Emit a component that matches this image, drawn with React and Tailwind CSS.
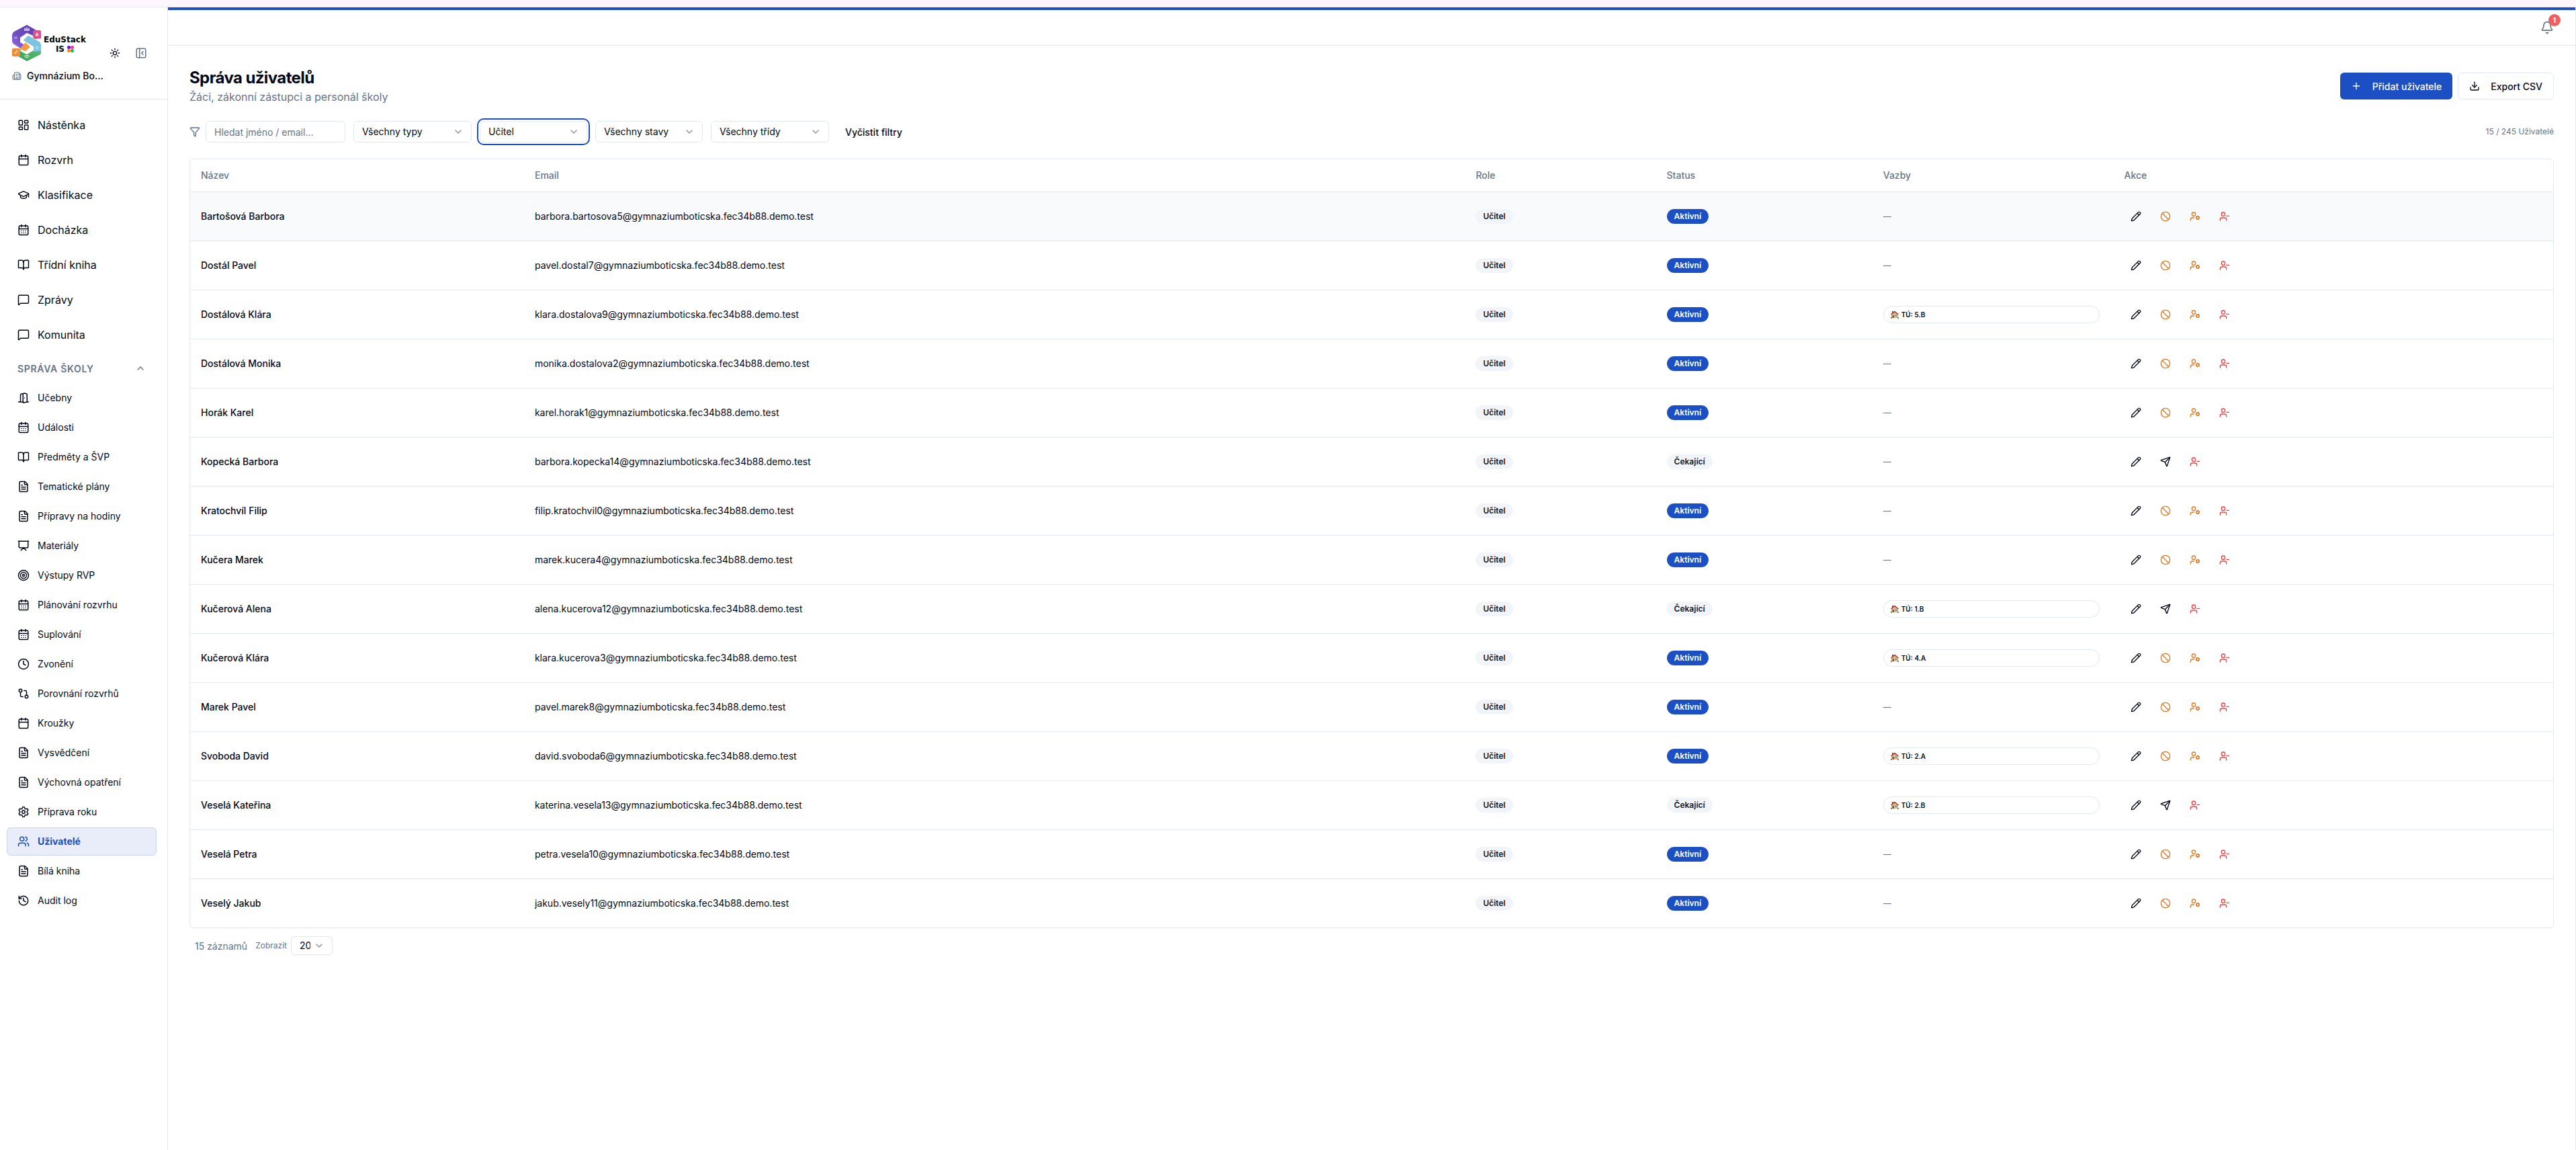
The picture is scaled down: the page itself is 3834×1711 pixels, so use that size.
import React from "react";
import {
  LayoutDashboard, Calendar, GraduationCap, CalendarDays, BookOpen, MessageSquare, ChevronUp, ChevronDown,
  FileText, Presentation, Target, Clock, GitCompare, Settings, Users, History, Sun, PanelLeftClose, Building2,
  Bell, Plus, Download, Pencil, Ban, UserCog, UserMinus, Send, Funnel, DoorOpen,
} from "lucide-react";

const mainNav = [
  [LayoutDashboard, "Nástěnka"],
  [Calendar, "Rozvrh"],
  [GraduationCap, "Klasifikace"],
  [CalendarDays, "Docházka"],
  [BookOpen, "Třídní kniha"],
  [MessageSquare, "Zprávy"],
  [MessageSquare, "Komunita"],
];

const schoolNav = [
  [DoorOpen, "Učebny"],
  [CalendarDays, "Události"],
  [BookOpen, "Předměty a ŠVP"],
  [FileText, "Tematické plány"],
  [FileText, "Přípravy na hodiny"],
  [Presentation, "Materiály"],
  [Target, "Výstupy RVP"],
  [CalendarDays, "Plánování rozvrhu"],
  [CalendarDays, "Suplování"],
  [Clock, "Zvonění"],
  [GitCompare, "Porovnání rozvrhů"],
  [Calendar, "Kroužky"],
  [FileText, "Vysvědčení"],
  [FileText, "Výchovná opatření"],
  [Settings, "Příprava roku"],
  [Users, "Uživatelé"],
  [FileText, "Bílá kniha"],
  [History, "Audit log"],
];

const users = [
  ["Bartošová Barbora", "barbora.bartosova5", true, null],
  ["Dostál Pavel", "pavel.dostal7", true, null],
  ["Dostálová Klára", "klara.dostalova9", true, "5.B"],
  ["Dostálová Monika", "monika.dostalova2", true, null],
  ["Horák Karel", "karel.horak1", true, null],
  ["Kopecká Barbora", "barbora.kopecka14", false, null],
  ["Kratochvíl Filip", "filip.kratochvil0", true, null],
  ["Kučera Marek", "marek.kucera4", true, null],
  ["Kučerová Alena", "alena.kucerova12", false, "1.B"],
  ["Kučerová Klára", "klara.kucerova3", true, "4.A"],
  ["Marek Pavel", "pavel.marek8", true, null],
  ["Svoboda David", "david.svoboda6", true, "2.A"],
  ["Veselá Kateřina", "katerina.vesela13", false, "2.B"],
  ["Veselá Petra", "petra.vesela10", true, null],
  ["Veselý Jakub", "jakub.vesely11", true, null],
];

function Logo() {
  return (
    <div className="flex items-center gap-[3px]">
      <svg className="h-[54px] w-11" viewBox="0 0 44 54">
        <defs>
          <linearGradient id="purple" x1="1" y1="0" x2="0" y2="1">
            <stop offset="0" stopColor="#5b3aa6" />
            <stop offset="0.6" stopColor="#6f4fc0" />
            <stop offset="1" stopColor="#a06ff0" />
          </linearGradient>
          <linearGradient id="green" x1="0" y1="1" x2="1" y2="0">
            <stop offset="0" stopColor="#3a9f55" />
            <stop offset="0.6" stopColor="#55b56e" />
            <stop offset="1" stopColor="#7cc4dc" />
          </linearGradient>
        </defs>
        <path d="M22 0 43 12v8l-9 1-3-5-9-4-10 7v7l12 7-5 6L3 29q-3-2-3-5V15q0-3 3-5z" fill="url(#purple)" />
        <path d="m24 16 16 9q3 2 3 5v11q0 3-3 4L22 54 4 44v-7l7-1 3 4 8 4 10-6v-6L17 23z" fill="url(#green)" />
        <path d="m24 16 16 9q3 2 3 5v9l-11 1v-8L17 23z" fill="#7cc4e0" />
        <path d="m20 26 7 7-7 6-9-3z" fill="#f59a45" />
        <rect x="31" y="8" width="12" height="12" rx="2" fill="#de4f8d" />
        <rect x="0" y="35" width="12" height="12" rx="2" fill="#f28c34" />
        <path d="m18 4 2 2 2-3 2 3 2-2v5h-8z" fill="#c3b3ec" />
        <path d="M35 16h4l-1-2v-1a1 1 0 0 0-2 0v1z" fill="#fbd0e2" stroke="#fbd0e2" />
        <path d="m4 43 4-5" stroke="#fde0c0" strokeWidth="2" />
        <path d="m4 18 3 3m0-4-3 4m-1-2h5" stroke="#b9a5ee" fill="none" />
        <circle cx="37" cy="34" r="2" stroke="#c6e9f4" fill="none" />
        <path d="M18 47q4-3 8 0M20 49q2-2 4 0" stroke="#c8ecd0" strokeWidth="1.5" fill="none" />
      </svg>
      <div className="pt-1 font-['DejaVu_Sans',sans-serif] text-[12px] font-bold leading-[14px] text-black">
        <div>EduStack</div>
        <div className="flex items-center justify-center gap-1">
          IS
          <span className="grid grid-cols-2">
            <i className="size-[5px] rounded-full bg-purple-700" />
            <i className="size-[5px] rounded-full bg-pink-500" />
            <i className="size-[5px] rounded-full bg-orange-400" />
            <i className="size-[5px] rounded-full bg-green-500" />
          </span>
        </div>
      </div>
    </div>
  );
}

function FilterSelect({ label, value, size, focused }) {
  return (
    <div className={"relative rounded-md " + size + (focused ? " outline-2 outline-offset-2 outline-[#1d4fc4]" : "")}>
      <select aria-label={label} className="h-full w-full appearance-none rounded-md border border-[#e2e8f0] bg-white pl-3 pr-8 text-[14px] leading-5 text-[#020817] outline-none">
        <option>{value}</option>
      </select>
      <span className="pointer-events-none absolute inset-y-0 right-3 flex items-center">
        <ChevronDown className="size-4 text-[#888d98]" />
      </span>
    </div>
  );
}

function IconButton({ label, children, color }) {
  return (
    <button aria-label={label} className={"flex size-9 items-center justify-center rounded-md " + color}>
      {children}
    </button>
  );
}

function House() {
  return (
    <svg className="mr-1 h-3 w-3" viewBox="0 0 12 12">
      <path d="M1 5.5 6 1.5l5 4V11H1z" fill="#e3b98c" />
      <path d="M0 5.5 6 .5l6 5-1 1-5-4-5 4z" fill="#a83a2c" />
      <path d="M2 1h2v3H2z" fill="#8a4a35" />
      <path d="M2.5 7H5v4H2.500z" fill="#8b5034" />
      <path d="M6.5 6.5h3V9h-3z" fill="#5ba3c9" />
      <path d="M0 10h2v2H0zM10 10h2v2h-2z" fill="#5f9a45" />
    </svg>
  );
}

export default function App() {
  return (
    <div className="flex min-h-screen flex-col bg-white font-[Inter,sans-serif] text-[#020817]">
      <div className="h-[11px] border-b border-[#e5e7eb] bg-[#fdf5ff]" />
      <div className="flex flex-1">
        <aside className="w-[250px] shrink-0 border-r border-[#e2e8f0]">
          <div className="h-[137px] border-b border-[#e2e8f0] px-[18px] pt-[26px]">
            <div className="flex h-[54px]">
              <Logo />
              <button aria-label="Motiv" className="ml-auto mr-[19px] mt-8 flex size-5 items-center justify-center">
                <Sun className="size-4" />
              </button>
              <button aria-label="Sbalit panel" className="mr-[11px] mt-8 flex size-5 items-center justify-center text-[#64748b]">
                <PanelLeftClose className="size-[18px]" />
              </button>
            </div>
            <div className="mt-3 flex items-center gap-2 text-[14px] font-medium leading-5">
              <Building2 className="size-[14px] text-[#64748b]" />
              Gymnázium Bo...
            </div>
          </div>
          <nav className="px-[10px] pt-3">
            {mainNav.map(([Icon, label]) => (
              <a key={label} href="#" className="flex h-[52px] items-center gap-3 px-4 text-[16px] leading-6">
                <Icon className="size-[18px]" />
                {label}
              </a>
            ))}
            <button className="mt-1 flex h-10 w-full items-center justify-between pl-4 pr-[22px] text-[14px] font-semibold tracking-wider text-[#64748b]">
              SPRÁVA ŠKOLY
              <ChevronUp className="size-4" />
            </button>
            <div className="flex flex-col gap-0.5 pt-[3px]">
              {schoolNav.map(([Icon, label]) => {
                const active = label === "Uživatelé";
                return (
                  <a
                    key={label}
                    href="#"
                    className={
                      "mr-1.5 flex h-[42px] items-center gap-3 rounded-md border px-[15px] text-[14px] leading-5 " +
                      (active ? "border-[#c9d5f2] bg-[#e8edf9] font-bold text-[#1d4fc4]" : "border-transparent")
                    }
                  >
                    <Icon className="size-[18px]" />
                    {label}
                  </a>
                );
              })}
            </div>
          </nav>
        </aside>
        <div className="flex-1 border-r border-[#e2e8f0]">
          <header className="flex h-[57px] items-start justify-end border-b border-t-4 border-b-[#e2e8f0] border-t-[#1d4fc4] pr-8 pt-4">
            <button aria-label="Oznámení" className="relative text-[#64748b]">
              <Bell className="size-5" />
              <span className="absolute -top-[10px] left-3 flex size-[18px] items-center justify-center rounded-full bg-[#ef6060] text-[10px] font-bold text-white">1</span>
            </button>
          </header>
          <main className="px-8 pt-8">
            <div className="flex items-center justify-between">
              <div>
                <h1 className="text-[24px] font-bold leading-8 tracking-tight">Správa uživatelů</h1>
                <p className="text-[16px] leading-6 text-[#64748b]">Žáci, zákonní zástupci a personál školy</p>
              </div>
              <div className="flex gap-2">
                <button className="flex h-10 items-center gap-4 rounded-md bg-[#1d4fc4] px-4 text-[14px] font-medium text-white">
                  <Plus className="size-4" />
                  Přidat uživatele
                </button>
                <button className="flex h-10 items-center gap-4 rounded-md border border-[#e2e8f0] px-4 text-[14px] font-medium">
                  <Download className="size-4" />
                  Export CSV
                </button>
              </div>
            </div>
            <div className="mt-6 flex items-center">
              <Funnel className="size-4 text-[#64748b]" />
              <input aria-label="Hledat" placeholder="Hledat jméno / email..." className="ml-2 mr-3 h-8 w-[208px] rounded-md border border-[#e2e8f0] px-3 text-[14px] placeholder:text-[#64748b]" />
              <div className="flex gap-3">
                <FilterSelect label="Typ" value="Všechny typy" size="h-8 w-44" />
                <FilterSelect label="Role" value="Učitel" size="h-8 w-40" focused />
                <FilterSelect label="Stav" value="Všechny stavy" size="h-8 w-40" />
                <FilterSelect label="Třída" value="Všechny třídy" size="h-8 w-44" />
              </div>
              <button className="ml-6 text-[14px] font-medium">Vyčistit filtry</button>
              <span className="ml-auto text-[12px] text-[#64748b]">15 / 245 Uživatelé</span>
            </div>
            <div className="mt-6 overflow-hidden rounded-md border border-[#e2e8f0]">
              <table className="w-full table-fixed text-left text-[14px] leading-5">
                <colgroup>
                  <col className="w-[14.13%]" />
                  <col className="w-[39.82%]" />
                  <col className="w-[8.08%]" />
                  <col className="w-[9.16%]" />
                  <col className="w-[10.2%]" />
                  <col />
                </colgroup>
                <thead>
                  <tr className="h-12 border-b border-[#e2e8f0] text-[#64748b]">
                    {["Název", "Email", "Role", "Status", "Vazby", "Akce"].map((h) => (
                      <th key={h} className="px-4 font-medium">{h}</th>
                    ))}
                  </tr>
                </thead>
                <tbody>
                  {users.map(([name, mail, active, cls], i) => (
                    <tr key={name} className={"h-[73px] border-b border-[#e2e8f0] last:border-b-0 " + (i === 0 ? "bg-[#f9fafc]" : "")}>
                      <td className="px-4 font-medium">{name}</td>
                      <td className="px-4">{mail}@gymnaziumboticska.fec34b88.demo.test</td>
                      <td className="px-4">
                        <span className="inline-flex rounded-full bg-[#f1f5f9] px-[11px] py-[3px] text-[12px] font-semibold leading-4 text-[#0f172a]">Učitel</span>
                      </td>
                      <td className="px-4">
                        <span className={"inline-flex rounded-full px-[11px] py-[3px] text-[12px] font-semibold leading-4 " + (active ? "bg-[#1d4fc4] text-white" : "bg-[#f1f5f9] text-[#0f172a]")}>
                          {active ? "Aktivní" : "Čekající"}
                        </span>
                      </td>
                      <td className="pl-4 pr-5 text-[12px] text-[#64748b]">
                        {cls ? (
                          <span className="flex h-[26px] items-center rounded-full border border-[#e2e8f0] px-[10px] text-[10px] font-semibold text-[#020817]">
                            <House />
                            TÚ: {cls}
                          </span>
                        ) : "—"}
                      </td>
                      <td className="px-4">
                        <div className="flex gap-2">
                          <IconButton label="Upravit" color="text-[#020817]"><Pencil className="size-4" /></IconButton>
                          {active ? (
                            <>
                              <IconButton label="Zablokovat" color="text-[#dd7c28]"><Ban className="size-4" /></IconButton>
                              <IconButton label="Nastavení" color="text-[#dd7c28]"><UserCog className="size-4" /></IconButton>
                            </>
                          ) : (
                            <IconButton label="Odeslat pozvánku" color="text-[#020817]"><Send className="size-4" /></IconButton>
                          )}
                          <IconButton label="Odebrat" color="text-[#ef4444]"><UserMinus className="size-4" /></IconButton>
                        </div>
                      </td>
                    </tr>
                  ))}
                </tbody>
              </table>
            </div>
            <div className="mt-3 flex items-center px-2 text-[#64748b]">
              <span className="text-[14px]">15 záznamů</span>
              <span className="ml-3 mr-1.5 text-[12px]">Zobrazit</span>
              <FilterSelect label="Zobrazit" value="20" size="h-7 w-[62px]" />
            </div>
          </main>
        </div>
      </div>
    </div>
  );
}
